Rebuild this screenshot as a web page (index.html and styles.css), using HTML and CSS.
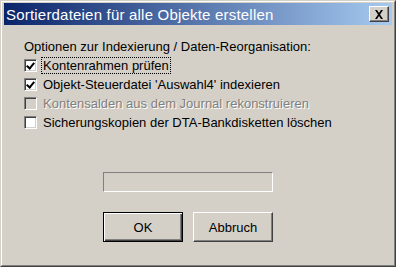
FILE: index.html
```html
<!DOCTYPE html>
<html lang="de">
  <head>
    <meta charset="UTF-8" />
    <title>Sortierdateien für alle Objekte erstellen</title>
    <link rel="stylesheet" href="styles.css">
  </head>
  <body>
    <div class="window">
      <div class="frame">
        <div class="titlebar">
          <span class="title">Sortierdateien für alle Objekte erstellen</span>
          <button class="close" type="button">
            <svg width="10" height="9" viewBox="0 0 10 9">
              <path d="M1 0h2l2 3 2-3h2L6 4.5 9 9H7L5 6 3 9H1l3-4.5z" fill="#000" />
            </svg>
          </button>
        </div>
        <div class="content">
          <div class="group-label">Optionen zur Indexierung / Daten-Reorganisation:</div>
          <div class="options">
            <div class="option">
              <span class="check checked"></span>
              <span class="label focused">Kontenrahmen prüfen</span>
            </div>
            <div class="option">
              <span class="check checked"></span>
              <span class="label">Objekt-Steuerdatei 'Auswahl4' indexieren</span>
            </div>
            <div class="option disabled">
              <span class="check"></span>
              <span class="label">Kontensalden aus dem Journal rekonstruieren</span>
            </div>
            <div class="option">
              <span class="check"></span>
              <span class="label">Sicherungskopien der DTA-Bankdisketten löschen</span>
            </div>
          </div>
          <div class="actions">
            <div class="progress"></div>
            <div class="buttons">
              <button class="btn default" type="button">OK</button>
              <button class="btn" type="button">Abbruch</button>
            </div>
          </div>
        </div>
      </div>
    </div>
  </body>
</html>
```

FILE: styles.css
```css
* {
  box-sizing: border-box;
}
body {
  margin: 0;
  font-family: "Liberation Sans", Arial, sans-serif;
  background-color: #d4d0c8;
}
.window {
  width: 396px;
  height: 267px;
  border: 1px solid;
  border-color: #d4d0c8 #404040 #404040 #d4d0c8;
  background-color: #d4d0c8;
}
.frame {
  height: 100%;
  border: 1px solid;
  border-color: #fff #808080 #808080 #fff;
  padding: 1px 2px;
}
.titlebar {
  height: 22px;
  display: flex;
  align-items: center;
  justify-content: space-between;
  padding: 0 3px 0 2px;
  background: linear-gradient(to right, #0a246a, #a6caf0);
}
.title {
  color: #fff;
  font-size: 15px;
  letter-spacing: 0.2px;
}
.close {
  width: 20px;
  height: 16px;
  padding: 0;
  display: flex;
  align-items: center;
  justify-content: center;
  background-color: #d4d0c8;
  border: 1px solid;
  border-color: #fff #404040 #404040 #fff;
  box-shadow: inset -1px -1px #808080;
}
.content {
  padding: 14px 0 0 20px;
  font-size: 13px;
  color: #000;
}
.group-label {
  height: 17px;
}
.options {
  display: flex;
  flex-direction: column;
}
.option {
  height: 19px;
  display: flex;
  align-items: center;
  gap: 4px;
}
.check {
  width: 13px;
  height: 13px;
  border: 1px solid;
  border-color: #808080 #fff #fff #808080;
  box-shadow: inset 1px 1px #404040, inset -1px -1px #d4d0c8;
  background-color: #fff;
  position: relative;
}
.check.checked::after {
  content: "";
  position: absolute;
  left: 2px;
  top: 1px;
  width: 3px;
  height: 6px;
  border: solid #000;
  border-width: 0 2px 2px 0;
  transform: translate(1px, 0) rotate(40deg);
}
.label {
  padding: 0 1px;
  border: 1px dotted transparent;
}
.label.focused {
  border-color: #000;
}
.disabled .check {
  background-color: #d4d0c8;
}
.disabled .label {
  color: #808080;
  text-shadow: 1px 1px #fff;
}
.actions {
  width: 170px;
  margin: 40px 0 0 79px;
  display: flex;
  flex-direction: column;
  gap: 20px;
}
.progress {
  height: 20px;
  border: 1px solid;
  border-color: #808080 #fff #fff #808080;
}
.buttons {
  display: flex;
  justify-content: space-between;
}
.btn {
  width: 80px;
  height: 30px;
  padding: 0;
  font-family: "Liberation Sans", Arial, sans-serif;
  font-size: 13px;
  color: #000;
  background-color: #d4d0c8;
  border: 1px solid;
  border-color: #fff #404040 #404040 #fff;
  box-shadow: inset -1px -1px #808080;
}
.btn.default {
  border: 1px solid #000;
  box-shadow: inset 1px 1px #fff, inset -1px -1px #404040, inset -2px -2px #808080;
}
```
